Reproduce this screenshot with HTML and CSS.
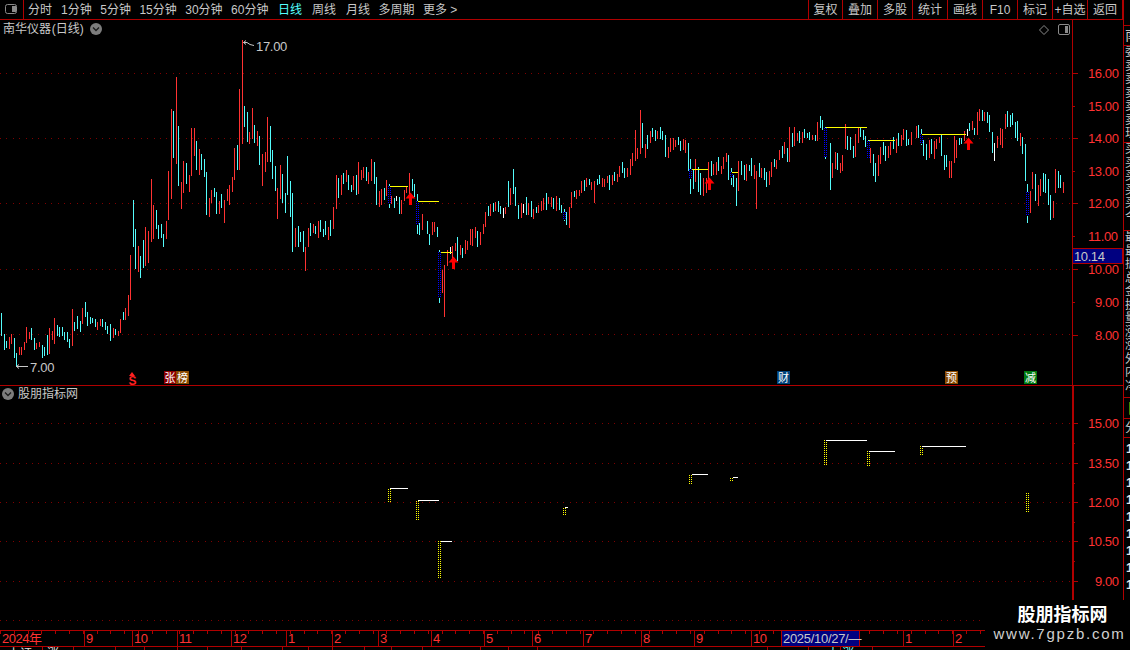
FILE: index.html
```html
<!DOCTYPE html>
<html lang="zh">
<head>
<meta charset="utf-8">
<title>股朋指标网</title>
<link rel="stylesheet" href="styles.css">
</head>
<body>
<div class="app">
  <div class="workspace">
    <header class="toolbar">
      <div class="panel-toggle">
        <svg class="box-icon" width="13" height="11" viewBox="0 0 13 11"><rect class="box-line" x=".5" y=".5" width="11" height="9" rx="2"/><rect class="box-fill" x="7" y="2" width="4" height="6"/></svg>
      </div>
      <nav class="periods">
        <span>分时</span><span>1分钟</span><span>5分钟</span><span>15分钟</span><span>30分钟</span><span>60分钟</span><span class="active">日线</span><span class="wide">周线</span><span class="wide">月线</span><span>多周期</span><span>更多 &gt;</span>
      </nav>
      <nav class="actions">
        <span>复权</span><span>叠加</span><span>多股</span><span>统计</span><span>画线</span><span>F10</span><span>标记</span><span>+自选</span><span>返回</span>
      </nav>
    </header>

    <section class="pane pane-main">
      <div class="pane-title title-main">
        <span class="title-text">南华仪器 (日线)</span>
        <svg class="chev" width="12" height="12" viewBox="0 0 12 12"><circle class="chev-bg" cx="6" cy="6" r="6"/><path class="chev-mark" d="M3 4.5 6 7.5 9 4.5"/></svg>
      </div>
      <div class="pane-tools">
        <svg width="10" height="10" viewBox="0 0 10 10"><path class="box-line" d="M5 .5 9.5 5 5 9.5 .5 5z"/></svg>
        <svg width="12" height="12" viewBox="0 0 12 12"><rect class="box-line" x=".5" y=".5" width="11" height="10" rx="1.5"/><rect class="box-fill" x="7" y="2" width="3" height="7"/></svg>
      </div>
      <svg class="chart" width="1123" height="366" viewBox="0 20 1123 366">
        <g class="grid">
          <path d="M0 73.5H1072M0 138.5H1072M0 203.5H1072M0 269.5H1072M0 334.5H1072"/>
        </g>
        <g class="bars">
          <path class="up" d="M9 337V349M11 334V344M19 347V355M21 347V355M24 342V350M26 327V343M29 332V339M36 343V349M39 342V347M49 328V354M52 331V340M54 318V344M72 309V346M82 308V324M97 322V330M100 319V326M113 328V338M118 331V336M120 319V333M125 308V320M128 295V316M130 255V300M138 246V272M145 227V266M148 231V263M151 179V242M153 205V239M166 221V239M168 171V220M171 109V199M176 77V164M181 182V209M183 161V193M189 175V192M191 128V176M194 128V156M199 149V175M209 198V217M211 190V203M219 201V214M224 200V223M227 189V201M229 185V205M232 177V192M234 148V180M239 89V170M242 40V144M249 132V144M252 108V139M257 131V146M262 154V186M265 152V172M267 117V162M277 188V219M280 165V199M295 228V247M305 247V271M308 228V247M313 224V233M318 221V238M328 227V240M333 207V229M336 175V209M341 175V195M346 170V182M353 176V190M358 162V194M361 170V180M363 167V178M368 172V184M371 159V181M379 191V207M381 189V205M386 180V196M391 196V204M401 200V214M404 190V201M406 187V193M409 173V195M422 214V230M432 222V235M434 222V232M442 270V293M444 265V317M447 250V266M452 246V259M455 243V251M460 245V255M465 240V254M467 241V250M470 229V245M472 229V246M475 227V238M480 232V245M483 224V234M485 212V227M490 204V216M495 202V211M505 207V214M510 188V205M521 203V218M528 203V215M533 209V219M538 205V213M541 201V211M543 198V210M548 197V204M551 197V207M556 196V211M569 207V228M571 192V208M576 190V199M579 190V196M581 181V193M586 178V187M591 182V190M594 181V203M602 178V187M604 179V187M607 176V183M612 175V185M617 174V182M619 166V177M627 168V177M630 159V175M632 153V166M635 130V161M637 148V159M640 110V154M645 144V158M650 131V143M657 131V139M668 147V158M670 138V152M673 138V150M675 140V147M683 139V150M685 140V153M695 159V182M703 178V196M706 178V193M708 162V185M713 164V175M716 162V175M721 166V174M723 157V169M726 153V162M738 161V191M746 164V181M754 165V179M756 171V209M761 168V178M769 171V185M771 162V177M776 160V169M779 150V160M784 142V154M789 127V162M794 127V146M797 133V141M802 132V143M812 135V140M817 122V141M832 163V178M835 152V169M840 163V173M842 155V171M845 124V149M855 134V157M858 127V143M870 148V163M878 155V176M880 147V164M888 146V158M890 142V155M896 139V153M901 135V146M903 129V140M911 132V145M916 126V138M929 140V158M934 141V159M936 139V149M939 137V143M949 161V178M951 161V178M954 136V163M956 140V158M964 131V141M972 121V130M977 112V135M979 109V121M984 112V121M997 136V148M1000 128V145M1002 129V148M1005 114V129M1020 133V146M1030 191V213M1032 172V189M1038 185V206M1040 179V196M1053 201V218M1055 169V193M1063 182V193"/>
          <path class="down" d="M1 313V336M4 334V350M6 341V348M14 338V358M16 353V367M31 328V340M34 338V350M42 345V358M44 347V356M47 335V355M57 325V336M59 327V337M62 327V336M64 332V340M67 332V342M69 339V348M74 322V331M77 316V329M80 321V332M85 302V317M87 312V326M90 317V324M92 318V323M95 319V327M102 319V327M105 322V330M107 326V334M110 324V341M115 329V335M123 312V320M133 200V247M135 229V269M140 256V278M143 240V268M156 210V229M158 225V239M161 224V238M163 234V247M173 111V158M178 126V186M186 163V184M196 141V170M201 154V170M204 159V177M206 172V215M214 188V197M216 192V214M221 194V208M237 145V170M244 106V127M247 112V142M254 125V143M259 136V165M270 126V162M272 150V179M275 166V191M282 174V203M285 193V213M287 156V195M290 181V217M292 193V252M298 226V247M300 232V242M303 231V252M310 223V236M315 226V234M320 220V232M323 229V237M325 221V235M330 220V236M338 178V198M343 173V184M348 175V190M351 185V192M356 175V195M366 167V181M374 162V184M376 177V205M384 188V200M389 184V208M394 198V208M399 197V214M412 179V191M414 184V197M417 194V234M419 223V235M427 221V234M429 234V245M437 227V237M439 250V303M457 237V261M462 248V258M477 231V247M488 206V216M493 203V212M498 201V212M500 206V214M508 181V207M513 169V194M515 187V206M518 205V219M526 197V215M531 201V217M536 207V213M546 193V210M553 198V209M559 198V210M561 205V213M564 209V221M566 212V225M574 191V197M584 180V191M589 179V185M597 179V185M599 175V184M609 175V190M614 172V181M622 162V173M624 168V178M642 123V148M647 135V149M652 128V137M655 130V141M660 127V139M662 131V140M665 135V157M678 137V145M680 141V151M688 143V171M690 159V194M693 170V189M698 167V192M700 173V195M711 161V176M718 157V171M728 155V180M731 168V185M733 175V187M736 178V206M741 161V175M744 165V180M749 165V171M751 158V176M759 163V177M764 168V180M766 172V187M774 159V167M782 146V158M787 148V162M792 133V147M799 131V143M804 129V138M807 133V138M809 132V140M815 135V141M820 116V128M822 120V130M825 127V159M830 143V190M837 153V170M847 136V150M850 137V150M853 146V158M860 128V137M863 130V140M865 136V147M868 140V158M873 154V176M875 163V182M883 142V155M885 146V161M893 137V149M898 133V146M906 130V146M908 139V145M918 125V138M921 129V145M923 140V156M926 144V160M931 139V154M941 135V156M944 155V170M946 155V167M959 138V145M961 138V144M969 123V131M974 128V135M982 110V121M987 112V123M989 115V132M992 132V153M1007 111V127M1010 115V127M1012 113V125M1015 122V138M1017 121V141M1022 137V154M1025 144V181M1027 184V223M1035 174V201M1043 173V192M1045 174V193M1048 179V205M1050 195V220M1058 171V188M1060 175V188"/>
          <path class="flat" d="M396 196V201M450 247V254M503 208V218M523 204V213M967 129V136M994 143V161"/>
          <path class="dots-bg" d="M389 186V204M417 201V225M439 252V298M564 212V220M690 169V179M731 172V178M825 128V157M868 141V158M921 134V144M1027 192V216"/>
          <path class="dots-blue" d="M388 186V204M390 186V204M416 201V225M418 201V225M438 252V298M440 252V298M563 212V220M565 212V220M689 169V179M691 169V179M730 172V178M732 172V178M824 128V157M826 128V157M867 141V158M869 141V158M920 134V144M922 134V144M1026 192V216M1028 192V216"/>
        </g>
        <path class="level-y" d="M390 186.5H408M418 201.5H439M441 252.5H452M692 169.5H708M732 172.5H738M826 127.5H867M869 140.5H895M922 134.5H966"/>
        <path class="arrow" d="M410.5 192.5l5 6h-3.500v6.500h-3v-6.500h-3.500zM453.500 256.500l5 6h-3.500v6.500h-3v-6.500h-3.500zM709.500 177.500l5 6h-3.500v6.500h-3v-6.500h-3.500zM968.500 137.500l5 6h-3.500v6.500h-3v-6.500h-3.500z"/>
        <path class="pointer" d="M246 40.500 243.500 42.500 246 44.500M243.500 42.500H247L250 44.500 254 45.500M19 364.500 16.500 366.500 19 368.500M16.500 366.500H28"/>
        <text class="val" x="256" y="51">17.00</text>
        <text class="val" x="30" y="372">7.00</text>

        <g class="signal">
          <path class="sig-s" d="M132 372 135 376H129z"/>
          <text class="sig-text sig-red" x="132.500" y="385">S</text>
          <rect class="tag-red" x="164" y="371" width="12" height="13"/>
          <rect class="tag-brown" x="176" y="371" width="13" height="13"/>
          <text class="sig-text" x="170" y="382">张</text>
          <text class="sig-text" x="182.500" y="382">榜</text>
          <rect class="tag-blue" x="777" y="371" width="13" height="13"/>
          <text class="sig-text" x="783.500" y="382">财</text>
          <rect class="tag-brown" x="945" y="371" width="13" height="13"/>
          <text class="sig-text" x="951.500" y="382">预</text>
          <rect class="tag-green" x="1024" y="371" width="13" height="13"/>
          <text class="sig-text" x="1030.500" y="382">减</text>
        </g>

        <path class="axis" d="M1072.500 20V386M0 385.500H1123M1072 73.500H1078M1072 106.500H1075M1072 138.500H1078M1072 171.500H1075M1072 203.500H1078M1072 236.500H1075M1072 269.500H1078M1072 302.500H1075M1072 335.500H1078"/>
        <g class="prices">
          <text x="1088" y="78">16.00</text><text x="1088" y="111">15.00</text><text x="1088" y="143">14.00</text><text x="1088" y="176">13.00</text><text x="1088" y="208">12.00</text><text x="1088" y="241">11.00</text><text x="1088" y="274">10.00</text><text x="1095" y="307">9.00</text><text x="1095" y="340">8.00</text>
        </g>
        <rect class="cur-box" x="1072.500" y="248.500" width="50" height="15"/>
        <text class="cur-text" x="1074" y="261">10.14</text>
      </svg>
    </section>

    <section class="pane pane-lower">
      <div class="pane-title title-lower">
        <svg class="chev" width="12" height="12" viewBox="0 0 12 12"><circle class="chev-bg" cx="6" cy="6" r="6"/><path class="chev-mark" d="M3 4.500 6 7.500 9 4.500"/></svg>
        <span>股朋指标网</span>
      </div>
      <svg class="chart" width="1123" height="244" viewBox="0 386 1123 244">
        <g class="grid">
          <path d="M0 423.500H1072M0 463.500H1072M0 502.500H1072M0 541.500H1072M0 581.500H1072M0 620.500H1072"/>
        </g>
        <g class="bars">
          <path class="dots-yellow" d="M388 489V503M390 489V503M416 501V521M418 501V521M438 541V579M440 541V579M563 508V515M565 508V515M689 475V484M691 475V484M730 478V482M732 478V482M824 440V465M826 440V465M867 451V466M869 451V466M920 446V455M922 446V455M1026 493V512M1028 493V512"/>
        </g>
        <path class="level-w" d="M390 488.500H408M418 500.500H439M441 541.500H452M565 507.500H568M692 474.500H708M733 477.500H738M826 440.500H867M869 451.500H895M922 446.500H966"/>
        <path class="axis-thick" d="M1073 386V600"/>
        <path class="axis" d="M1072 423.500H1078M1072 443.500H1075M1072 463.500H1078M1072 483.500H1075M1072 502.500H1078M1072 522.500H1075M1072 541.500H1078M1072 561.500H1075M1072 581.500H1078"/>
        <g class="prices">
          <text x="1088" y="428">15.00</text><text x="1088" y="468">13.50</text><text x="1088" y="507">12.00</text><text x="1088" y="546">10.50</text><text x="1095" y="586">9.00</text>
        </g>
      </svg>
    </section>

    <section class="time-axis">
      <svg class="chart" width="1123" height="20" viewBox="0 630 1123 20">
        <path class="time-ticks" d="M0 632H985"/>
        <path class="axis" d="M0 630.500H985M0 646.500H985M84.500 630V646M132.500 630V646M177.500 630V646M231.500 630V646M286.500 630V646M332.500 630V646M378.500 630V646M431.500 630V646M484.500 630V646M532.500 630V646M583.500 630V646M641.500 630V646M694.500 630V646M751.500 630V646M903.500 630V646M953.500 630V646"/>
        <rect class="date-box" x="781.500" y="630.500" width="78" height="16"/>
        <g class="months">
          <text x="2" y="643">2024年</text><text x="86" y="643">9</text><text x="134" y="643">10</text><text x="179" y="643">11</text><text x="233" y="643">12</text><text x="288" y="643">1</text><text x="334" y="643">2</text><text x="380" y="643">3</text><text x="433" y="643">4</text><text x="486" y="643">5</text><text x="534" y="643">6</text><text x="585" y="643">7</text><text x="643" y="643">8</text><text x="696" y="643">9</text><text x="753" y="643">10</text><text x="905" y="643">1</text><text x="955" y="643">2</text>
        </g>
        <text class="date-text" x="783" y="643">2025/10/27/—</text>
        <path class="axis" d="M42.500 646V650M73.500 646V650M115.500 646V650M144.500 646V650M177.500 646V650M207.500 646V650M241.500 646V650M282.500 646V650M308.500 646V650M332.500 646V650M364.500 646V650M391.500 646V650M422.500 646V650M480.500 646V650M508.500 646V650M537.500 646V650M767.500 646V650M808.500 646V650M840.500 646V650M872.500 646V650"/>
        <text class="foot" x="8" y="658">上证</text>
        <text class="foot" x="47" y="658">涨</text>
        <text class="foot foot-cy" x="827" y="658">大 涨</text>
      </svg>
    </section>
  </div>

  <aside class="side">
    <div class="side-block sb-name">南华仪器</div>
    <div class="side-block sb-queue"><p>委比</p><p>卖五</p><p>卖四</p><p>卖三</p><p>卖二</p><p>卖一</p><p>现价</p></div>
    <div class="side-block sb-bids"><p>买一</p><p>买二</p><p>买三</p><p>买四</p><p>买五</p><p>今开</p></div>
    <div class="side-block sb-stats"><p>最高</p><p>最低</p><p>振幅</p><p>总量</p><p>金额</p><p>换手</p><p>量比</p><p>涨跌</p><p>涨幅</p><p>外盘</p><p>内盘</p><p>净资</p></div>
    <div class="side-block sb-flag">日</div>
    <div class="side-block sb-head">分时</div>
    <div class="side-block sb-ticks"><p>11</p><p>12</p><p>11</p><p>13</p><p>14</p><p>11</p><p>12</p><p>10</p><p>11</p></div>
  </aside>

  <div class="watermark">
    <strong>股朋指标网</strong>
    <span>www.7gpzb.com</span>
  </div>
</div>
</body>
</html>
```

FILE: styles.css
```css
* { box-sizing: border-box; margin: 0; padding: 0; }
html, body { width: 100%; height: 100%; background: #000; overflow: hidden; }
body { font-family: "Liberation Sans", "Noto Sans CJK SC", sans-serif; color: #c8c8c8; }

.app { position: relative; display: flex; width: 1130px; height: 650px; overflow: hidden; background: #000; }
.workspace { display: flex; flex-direction: column; width: 1123px; flex: none; }

/* toolbar */
.toolbar { display: flex; align-items: stretch; height: 20px; flex: none; border-bottom: 1px solid #b00000; font-size: 12px; line-height: 20px; }
.panel-toggle { display: flex; align-items: center; justify-content: center; width: 24px; border-right: 1px solid #b00000; }
.box-icon { display: block; margin-top: -1px; }
.box-line { fill: none; stroke: #8a8a8a; }
.box-fill { fill: #8a8a8a; }
.periods { display: flex; gap: 8.5px; padding-left: 4px; }
.periods span:nth-child(2) { margin-left: .5px; }
.periods .active { color: #54ffff; margin-left: 1px; }
.periods .wide { margin-left: 1.5px; }
.actions { display: flex; margin-left: auto; border-left: 1px solid #b00000; }
.actions span { display: block; width: 35px; text-align: center; border-right: 1px solid #b00000; }
.actions span:nth-child(1) { width: 34px; }

/* panes */
.pane { position: relative; flex: none; }
.pane-main { height: 366px; }
.pane-lower { height: 244px; }
.time-axis { height: 20px; flex: none; }
.chart { display: block; overflow: hidden; }

.pane-title { position: absolute; display: flex; align-items: center; font-size: 12px; line-height: 16px; }
.title-main { left: 3px; top: 1px; gap: 6px; }
.title-text { word-spacing: -2.5px; }
.title-lower { left: 2px; top: 0; gap: 4px; }
.chev-bg { fill: #7d7d7d; }
.chev-mark { fill: none; stroke: #1c1c1c; stroke-width: 1.3px; }
.pane-tools { position: absolute; top: 4px; left: 1039px; display: flex; align-items: center; gap: 9px; }
.pane-tools svg { display: block; }

/* chart strokes */
.grid path { fill: none; stroke: #800000; stroke-dasharray: 1 5.4; shape-rendering: crispEdges; }
.bars { transform: translateX(.5px); }
.bars path { fill: none; shape-rendering: crispEdges; }
.up { stroke: #ff3232; }
.down { stroke: #54fcfc; }
.flat { stroke: #fff; }
.bars .dots-bg { stroke: #000; stroke-width: 3; }
.dots-blue { stroke: #0000ff; stroke-dasharray: 1 1; }
.dots-yellow { stroke: #ffff00; stroke-dasharray: 1 1; }
.level-y { fill: none; stroke: #ffff00; shape-rendering: crispEdges; }
.level-w { fill: none; stroke: #fff; shape-rendering: crispEdges; }
.arrow { fill: #ff0000; }
.pointer { fill: none; stroke: #c8c8c8; }
.val { font-size: 13px; fill: #c8c8c8; letter-spacing: -.3px; }

.signal text { font-family: "Noto Sans CJK SC", sans-serif; }
.sig-text { font-size: 11px; fill: #fff; text-anchor: middle; }
.signal .sig-red { font-family: "Liberation Sans", sans-serif; font-weight: 700; font-size: 12px; fill: #ff2020; }
.sig-s { fill: #ff2020; }
.tag-red { fill: #8b0000; }
.tag-brown { fill: #8a4a00; }
.tag-blue { fill: #00427a; }
.tag-green { fill: #007a10; }

.axis { fill: none; stroke: #b00000; shape-rendering: crispEdges; }
.axis-thick { fill: none; stroke: #b00000; stroke-width: 2; shape-rendering: crispEdges; }
.prices text { font-size: 13px; letter-spacing: -.4px; fill: #ff3232; }
.cur-box { fill: #000080; stroke: #b00000; shape-rendering: crispEdges; }
.cur-text { font-size: 13px; letter-spacing: -.4px; fill: #c8c8c8; }

/* time axis */
.time-ticks { fill: none; stroke: #b00000; stroke-width: 3; stroke-dasharray: 1 12.8; shape-rendering: crispEdges; }
.months text { font-size: 13px; letter-spacing: -.5px; fill: #ff3232; }
.date-box { fill: #000080; stroke: #b00000; shape-rendering: crispEdges; }
.date-text { font-size: 13px; letter-spacing: -.3px; fill: #c8c8c8; }
.foot { font-size: 12px; fill: #e0e0e0; }
.foot-cy { fill: #7ff; }

/* side list, cropped by the window */
.side { display: flex; flex-direction: column; width: 7px; flex: none; height: 600px; padding-top: 25px; border-left: 1px solid #b00000; overflow: hidden; font-size: 12px; line-height: 13.5px; white-space: nowrap; }
.side-block { flex: none; padding-left: 1px; border-top: 1px solid #b00000; overflow: hidden; width: 40px; }
.sb-name { height: 20px; font-size: 14px; line-height: 19px; }
.sb-queue { height: 97px; }
.sb-bids { height: 88px; }
.sb-stats { height: 167px; }
.sb-flag { height: 21px; color: #d8d800; font-size: 14px; line-height: 20px; padding-left: 3px; }
.sb-head { height: 19px; line-height: 18px; }
.sb-ticks { flex: 1; padding-left: 2px; line-height: 17px; padding-top: 2px; font-weight: 700; color: #e6e6e6; font-size: 13px; }

/* watermark */
.watermark { position: absolute; left: 985px; top: 600px; width: 145px; height: 50px; display: flex; flex-direction: column; align-items: center; background: #000; color: #fff; padding: 3px 0 0 4px; }
.watermark strong { font-family: "Noto Sans CJK SC", sans-serif; font-size: 18px; line-height: 21px; font-weight: 700; padding-left: 6px; }
.watermark span { font-size: 15px; line-height: 19px; letter-spacing: 1.75px; color: #d0d0d0; }
```
